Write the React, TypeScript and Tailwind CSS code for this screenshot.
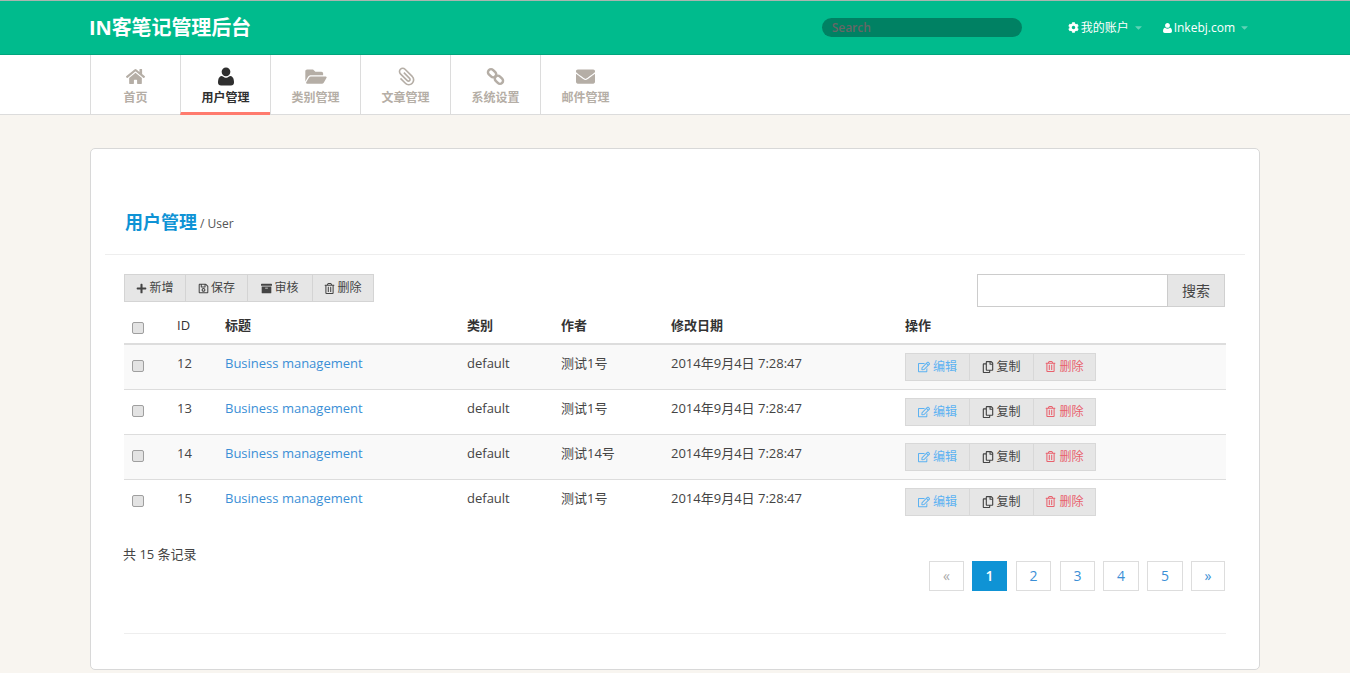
import { FaArchive, FaCaretDown, FaCog, FaEnvelope, FaFolderOpen, FaHome, FaPlus, FaRegCopy, FaRegEdit, FaRegSave, FaRegTrashAlt } from 'react-icons/fa'
import { ImAttachment } from 'react-icons/im'

// old font-awesome person, rounder than the one in the icon package
function UserIcon({ className }: { className?: string }) {
  return (
    <svg viewBox="0 0 1408 1584" className={className} fill="currentColor" aria-hidden>
      <path d="M1408 1325q0 120-73 189.5t-194 69.5H267q-121 0-194-69.5T0 1325q0-53 3.5-103.5t14-109T44 1004t43-97.5 62-81 85.5-53.5T346 752q9 0 42 21.5t74.5 48 108 48T704 891t133.5-21.5 108-48 74.5-48 42-21.5q61 0 111.5 20t85.5 53.5 62 81 43 97.5 26.5 108.5 14 109 3.5 103.5zm-320-941q0 159-112.5 271.5T704 768 432.5 655.5 320 384t112.5-271.5T704 0t271.5 112.5T1088 384z" />
    </svg>
  )
}

// two chain rings running top-left to bottom-right
function ChainIcon({ className }: { className?: string }) {
  return (
    <svg viewBox="0 0 20 20" className={className} fill="none" stroke="currentColor" strokeWidth="2.6" aria-hidden>
      <rect x="1.6" y="3.4" width="9.6" height="6.4" rx="3.2" transform="rotate(45 6.4 6.6)" />
      <rect x="8.8" y="10.2" width="9.6" height="6.4" rx="3.2" transform="rotate(45 13.6 13.4)" />
    </svg>
  )
}

const tabs = [
  { label: '首页', icon: <FaHome className="w-[19px] h-[19px]" /> },
  { label: '用户管理', icon: <UserIcon className="w-[16px] h-[19px]" />, active: true },
  { label: '类别管理', icon: <FaFolderOpen className="w-[22px] h-[19px]" /> },
  { label: '文章管理', icon: <ImAttachment className="w-[18px] h-[19px] -scale-x-100" /> },
  { label: '系统设置', icon: <ChainIcon className="w-[19px] h-[19px]" /> },
  { label: '邮件管理', icon: <FaEnvelope className="w-[21px] h-[19px]" /> },
]

const tools = [
  { label: '新增', icon: FaPlus, w: 'w-[60px]' },
  { label: '保存', icon: FaRegSave, w: 'w-[62px]' },
  { label: '审核', icon: FaArchive, w: 'w-[65px]' },
  { label: '删除', icon: FaRegTrashAlt, w: 'w-[61px]' },
]

const rows = [
  { id: 12, author: '测试1号' },
  { id: 13, author: '测试1号' },
  { id: 14, author: '测试14号' },
  { id: 15, author: '测试1号' },
]

const pages = [
  { label: '«', w: 'w-[35px]', muted: true },
  { label: '1', w: 'w-[35px]', active: true },
  { label: '2', w: 'w-[35px] ml-px' },
  { label: '3', w: 'w-[35px] ml-px' },
  { label: '4', w: 'w-[36px]' },
  { label: '5', w: 'w-[36px]' },
  { label: '»', w: 'w-[34px]' },
]

function Header() {
  return (
    <header className="h-[55px] bg-[#00bb8d] border-t border-t-[#a9b5b0] border-b border-b-[#00a57c] flex items-center pl-[90px] pr-[100px]">
      <h1 className="text-[20px] font-bold text-white leading-none tracking-[-0.1px] -ml-px">IN客笔记管理后台</h1>
      <input
        placeholder="Search"
        className="ml-auto w-[200px] h-[19px] rounded-full bg-[#008163] px-[10px] text-xs font-semibold outline-none placeholder:text-[#666]"
      />
      <div className="ml-[46px] flex items-center text-white text-xs">
        <FaCog className="text-[11px] mr-[2px]" />
        我的账户
        <FaCaretDown className="ml-[4px] text-[11px] text-[#5fd2b6]" />
      </div>
      <div className="ml-[19px] flex items-center text-white text-xs">
        <UserIcon className="w-[9px] h-[10px] mr-[2px]" />
        Inkebj.com
        <FaCaretDown className="ml-[4px] text-[11px] text-[#5fd2b6]" />
      </div>
    </header>
  )
}

function Tabs() {
  return (
    <nav className="h-[60px] bg-white border-b border-[#dcdcdc] pl-[90px] flex">
      {tabs.map((t) => (
        <a
          key={t.label}
          className={`w-[90px] h-[60px] border-l border-[#dcdcdc] flex flex-col items-center pt-[12px] text-xs font-semibold ${t.active ? 'text-[#2f2f2f] border-b-[3px] border-b-[#ff7b6e]' : 'text-[#b5aea6]'}`}
        >
          {t.icon}
          <span className="mt-[3px] leading-[18px]">{t.label}</span>
        </a>
      ))}
    </nav>
  )
}

function Toolbar() {
  return (
    <div className="flex items-start justify-between pl-[33px] pr-[34px]">
      <div className="flex h-[28px] border border-[#d4d4d4] bg-[#e6e6e6]">
        {tools.map((t, i) => {
          const Icon = t.icon
          return (
            <button key={t.label} className={`${t.w} flex items-center justify-center gap-[2px] text-xs text-[#444] ${i > 0 ? 'border-l border-[#d4d4d4]' : ''}`}>
              <Icon className="text-[11px]" />
              {t.label}
            </button>
          )
        })}
      </div>
      <div className="flex h-[33px]">
        <input className="w-[191px] h-full border border-[#ccc] bg-white outline-none" />
        <button className="w-[57px] h-full border border-l-0 border-[#d0d0d0] bg-[#e6e6e6] text-sm text-[#444]">搜索</button>
      </div>
    </div>
  )
}

function Actions() {
  return (
    <div className="flex w-[191px] h-[28px] border border-[#d8d8d8] bg-[#e6e6e6] text-xs">
      <button className="w-[63px] flex items-center justify-center gap-[3px] text-[#5cb2f2]">
        <FaRegEdit className="text-[12px]" />编辑
      </button>
      <button className="w-[64px] flex items-center justify-center gap-[2px] border-l border-[#d8d8d8] text-[#444]">
        <FaRegCopy className="text-[12px]" />复制
      </button>
      <button className="flex-1 flex items-center justify-center gap-[3px] border-l border-[#d8d8d8] text-[#e9606c]">
        <FaRegTrashAlt className="text-[11px]" />删除
      </button>
    </div>
  )
}

function Checkbox() {
  return <span className="block w-[12px] h-[12px] rounded-[2px] border border-[#9f9f9f] bg-[#e3e3e3]" />
}

function UserTable() {
  return (
    <table className="ml-[33px] mt-[3px] w-[1102px] table-fixed text-[13px] text-[#444] border-collapse">
      <colgroup>
        <col className="w-[45px]" />
        <col className="w-[48px]" />
        <col className="w-[242px]" />
        <col className="w-[94px]" />
        <col className="w-[110px]" />
        <col className="w-[234px]" />
        <col />
      </colgroup>
      <thead>
        <tr className="h-[34px] border-b-2 border-[#dddddd] text-left text-[#333]">
          <th className="pl-[8px] pt-[2px]"><Checkbox /></th>
          <th className="pl-[8px] pb-[1px] font-normal">ID</th>
          <th className="pl-[8px] pb-[1px] font-semibold">标题</th>
          <th className="pl-[8px] pb-[1px] font-semibold">类别</th>
          <th className="pl-[8px] pb-[1px] font-semibold">作者</th>
          <th className="pl-[8px] pb-[1px] font-semibold">修改日期</th>
          <th className="pl-[8px] pb-[1px] font-semibold">操作</th>
        </tr>
      </thead>
      <tbody>
        {rows.map((r, i) => (
          <tr key={r.id} className={`h-[45px] ${i % 2 === 0 ? 'bg-[#f9f9f9]' : 'bg-white'} ${i < 3 ? 'border-b border-[#dddddd]' : ''}`}>
            <td className="pl-[8px] pb-[2px]"><Checkbox /></td>
            <td className="pl-[8px] pb-[6px]">{r.id}</td>
            <td className="pl-[8px] pb-[6px] text-[#3b8fd6]">Business management</td>
            <td className="pl-[8px] pb-[6px]">default</td>
            <td className="pl-[8px] pb-[6px]">{r.author}</td>
            <td className="pl-[8px] pb-[6px]">2014年9月4日 7:28:47</td>
            <td className="pl-[8px]"><Actions /></td>
          </tr>
        ))}
      </tbody>
    </table>
  )
}

function Pagination() {
  return (
    <div className="flex gap-[8px] mt-[25px]">
      {pages.map((p) => (
        <a
          key={p.label}
          className={`${p.w} h-[30px] flex items-center justify-center border text-sm ${p.active ? 'bg-[#0f93d5] border-[#0f93d5] text-white font-semibold' : p.muted ? 'border-[#dddddd] text-[#aaa]' : 'border-[#dddddd] text-[#3b8fd6]'}`}
        >
          {p.label}
        </a>
      ))}
    </div>
  )
}

export default function App() {
  return (
    <div className="min-h-[673px] bg-[#f8f5f0] font-['Open_Sans','Noto_Sans_CJK_SC',sans-serif] overflow-hidden">
      <Header />
      <Tabs />
      <main className="mx-[90px] mt-[33px] h-[522px] bg-white border border-[#d8d8d8] rounded-[5px] pt-[60px]">
        <div className="h-[46px] mx-[14px] pl-[20px] border-b border-[#eeeeee] flex items-start">
          <h2 className="text-[18px] font-bold text-[#0f93d5] leading-[27px]">用户管理</h2>
          <span className="ml-[3px] mt-[6px] text-xs text-[#555] leading-[18px]">/ User</span>
        </div>
        <div className="h-[19px]" />
        <Toolbar />
        <UserTable />
        <div className="flex justify-between pl-[32px] pr-[34px] mt-[12px]">
          <p className="text-[13px] text-[#444] leading-[18px] mt-[9px]">共 15 条记录</p>
          <Pagination />
        </div>
        <div className="mx-[33px] mt-[42px] border-t border-[#eeeeee]" />
      </main>
    </div>
  )
}
